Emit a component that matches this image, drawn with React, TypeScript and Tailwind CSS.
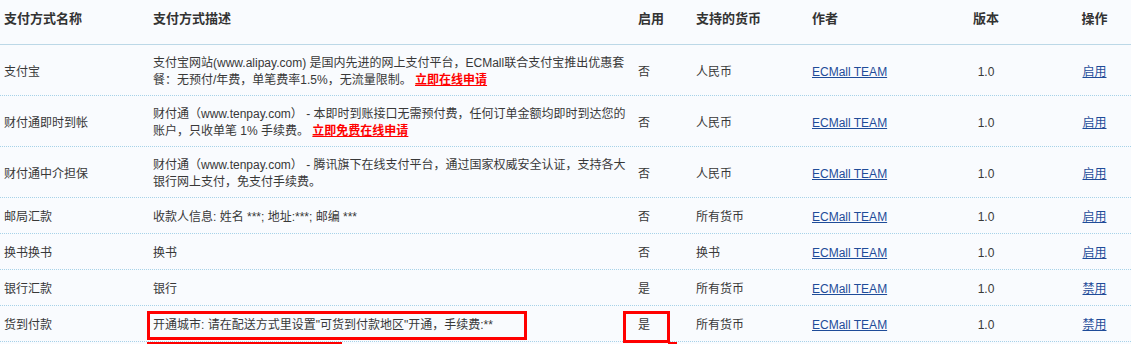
import React from "react";

interface PayRow {
  name: string;
  desc: React.ReactNode;
  enabled: string;
  currency: string;
  action: string;
  h: string;
}

const linkCls = "text-[#1f4c99] underline";
const hotCls = "text-[#ff0000] font-bold underline";

const rows: PayRow[] = [
  {
    name: "支付宝",
    desc: (
      <>
        <div>支付宝网站(www.alipay.com) 是国内先进的网上支付平台，ECMall联合支付宝推出优惠套</div>
        <div>
          餐：无预付/年费，单笔费率1.5%，无流量限制。 <a className={hotCls}>立即在线申请</a>
        </div>
      </>
    ),
    enabled: "否",
    currency: "人民币",
    action: "启用",
    h: "h-[47px]",
  },
  {
    name: "财付通即时到帐",
    desc: (
      <>
        <div>财付通（www.tenpay.com） - 本即时到账接口无需预付费，任何订单金额均即时到达您的</div>
        <div>
          账户，只收单笔 1% 手续费。 <a className={hotCls}>立即免费在线申请</a>
        </div>
      </>
    ),
    enabled: "否",
    currency: "人民币",
    action: "启用",
    h: "h-[47px]",
  },
  {
    name: "财付通中介担保",
    desc: (
      <>
        <div>财付通（www.tenpay.com） - 腾讯旗下在线支付平台，通过国家权威安全认证，支持各大</div>
        <div>银行网上支付，免支付手续费。</div>
      </>
    ),
    enabled: "否",
    currency: "人民币",
    action: "启用",
    h: "h-[47px]",
  },
  {
    name: "邮局汇款",
    desc: "收款人信息: 姓名 ***; 地址:***; 邮编 ***",
    enabled: "否",
    currency: "所有货币",
    action: "启用",
    h: "h-[32px]",
  },
  {
    name: "换书换书",
    desc: "换书",
    enabled: "否",
    currency: "换书",
    action: "启用",
    h: "h-[32px]",
  },
  {
    name: "银行汇款",
    desc: "银行",
    enabled: "是",
    currency: "所有货币",
    action: "禁用",
    h: "h-[32px]",
  },
  {
    name: "货到付款",
    desc: "开通城市: 请在配送方式里设置\"可货到付款地区\"开通，手续费:**",
    enabled: "是",
    currency: "所有货币",
    action: "禁用",
    h: "h-[32px]",
  },
];

const grid =
  "grid grid-cols-[149px_485px_58px_116px_124px_108px_1fr] items-center";

const App: React.FC = () => {
  return (
    <div
      className="relative w-[1131px] h-[344px] overflow-hidden bg-[#f9fbfe] text-[12px] text-[#383838]"
      style={{ fontFamily: '"Liberation Sans", "Noto Sans CJK SC", sans-serif' }}
    >
      <div
        className={`${grid} h-[45px] pb-[7px] border-b border-[#bcd8e7] text-[13px] font-bold text-[#333]`}
      >
        <div className="pl-[4px]">支付方式名称</div>
        <div className="pl-[4px]">支付方式描述</div>
        <div className="pl-[4px]">启用</div>
        <div className="pl-[4px]">支持的货币</div>
        <div className="pl-[4px]">作者</div>
        <div className="text-center">版本</div>
        <div className="text-center pl-[18px]">操作</div>
      </div>
      {rows.map((r, i) => (
        <div
          key={i}
          className={`${grid} ${r.h} box-content pt-[3px] border-b border-dotted border-[#a7d2e8]`}
        >
          <div className="pl-[4px]">{r.name}</div>
          <div className="pl-[4px] leading-[17px] whitespace-nowrap">{r.desc}</div>
          <div className="pl-[4px]">{r.enabled}</div>
          <div className="pl-[4px]">{r.currency}</div>
          <div className="pl-[4px]">
            <a className={linkCls}>ECMall TEAM</a>
          </div>
          <div className="text-center">1.0</div>
          <div className="text-center pl-[18px]">
            <a className={linkCls}>{r.action}</a>
          </div>
        </div>
      ))}
      {/* annotation marks */}
      <div className="absolute left-[147px] top-[311px] w-[380px] h-[29px] border-[3px] border-[#ff0000]" />
      <div className="absolute left-[623px] top-[311px] w-[47px] h-[32px] border-[3px] border-[#ff0000]" />
      <div className="absolute left-[147px] top-[342px] w-[195px] h-[3px] bg-[#ff0000]" />
      <div className="absolute left-[668px] top-[342px] w-[9px] h-[3px] bg-[#ff0000]" />
    </div>
  );
};

export default App;
